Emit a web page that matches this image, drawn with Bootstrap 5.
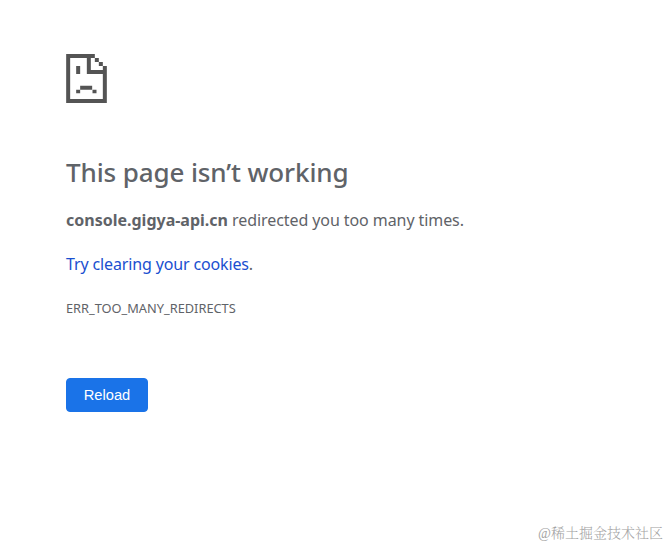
<!DOCTYPE html>
<html lang="en">
<head>
  <meta charset="UTF-8">
  <meta name="viewport" content="width=device-width, initial-scale=1">
  <title>console.gigya-api.cn</title>
  <link href="https://cdn.jsdelivr.net/npm/bootstrap@5.3.3/dist/css/bootstrap.min.css" rel="stylesheet">
  <style>
    body { font-family: "Noto Sans", "Open Sans", sans-serif; color: #5f6368; background: #fff; }
    .error-main { padding: 54px 66px 0; font-size: 16px; line-height: 24px; }
    .error-icon { width: 41px; height: 49px; fill: #545454; }
    .error-title { margin: 49px 0 0; font-size: 26px; font-weight: 500; line-height: 40px; letter-spacing: -.12px; }
    .error-text { margin-top: 16px; letter-spacing: -.08px; }
    .error-text strong { letter-spacing: 0; }
    .error-link { margin-top: 20px; letter-spacing: -.14px; }
    .error-link a { color: #1a4fd0; }
    .error-code { margin-top: 20px; font-size: 12.8px; letter-spacing: 0; }
    .btn-reload {
      --bs-btn-color: #fff; --bs-btn-bg: #1a73e8; --bs-btn-border-color: #1a73e8;
      --bs-btn-hover-color: #fff; --bs-btn-hover-bg: #1765cc;
      width: 82px; height: 34px; margin-top: 58px; padding: 0; border-radius: 4px;
      font: 14.7px/32px "Liberation Sans", Arial, sans-serif;
    }
    .watermark { padding: 0 4px 2px 0; font: 14px/20px "Liberation Serif", "Noto Serif CJK SC", "Noto Sans CJK SC", serif; font-weight: 300; color: #a4a4a4; }
  </style>
</head>
<body class="d-flex flex-column vh-100 overflow-hidden">

<main class="error-main flex-grow-1">
  <svg class="error-icon d-block" viewBox="0 0 122 147">
    <!-- page outline with folded corner -->
    <path fill-rule="evenodd" d="M0 0H86V12H98V24H110V36H122V147H0ZM12 12V135H110V60H62V12ZM74 12V48H110V36H98V24H86V12Z"/>
    <!-- face -->
    <path d="M30 36H42V60H30ZM42 95H78V107H42ZM30 107H42V118H30ZM79 107H91V118H79Z"/>
  </svg>
  <h1 class="error-title text-nowrap">This page isn’t working</h1>
  <p class="error-text mb-0 text-nowrap"><strong>console.gigya-api.cn</strong> redirected you too many times.</p>
  <p class="error-link mb-0"><a href="#" class="text-decoration-none">Try clearing your cookies</a>.</p>
  <div class="error-code">ERR_TOO_MANY_REDIRECTS</div>
  <button type="button" class="btn btn-reload">Reload</button>
</main>

<footer class="watermark text-end">@稀土掘金技术社区</footer>

<script src="https://cdn.jsdelivr.net/npm/bootstrap@5.3.3/dist/js/bootstrap.bundle.min.js"></script>
</body>
</html>
